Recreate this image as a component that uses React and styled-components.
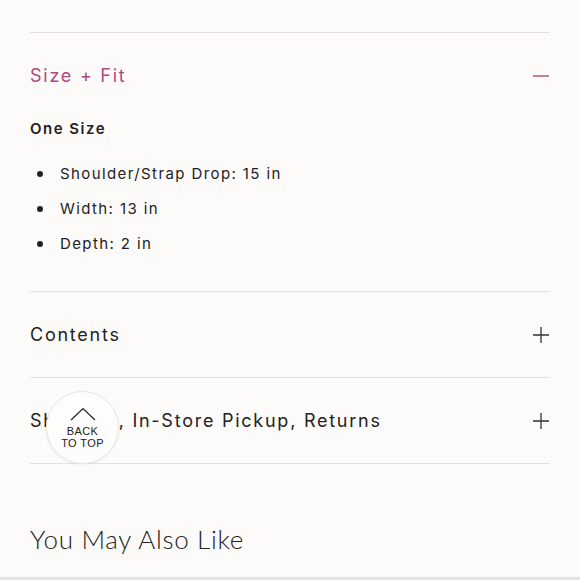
import React from "react"
import styled, { createGlobalStyle } from "styled-components"

const GlobalStyle = createGlobalStyle`
  html, body {
    margin: 0;
    padding: 0;
    background: #fdfbfa;
  }
  body {
    font-family: Inter, "Liberation Sans", sans-serif;
    color: #222;
  }
`

const Page = styled.div`
  position: relative;
  width: 580px;
  height: 580px;
  overflow: hidden;
  background: #fdfbfa;
  box-sizing: border-box;
  padding: 32px 30px 0;
`

const Section = styled.section`
  border-top: 1px solid #e4e1df;
`

const Header = styled.div`
  display: flex;
  align-items: center;
  justify-content: space-between;
  height: 85px;
`

const Title = styled.h3`
  margin: 0;
  font-family: Inter, "Liberation Sans", sans-serif;
  font-weight: 400;
  font-size: 18px;
  letter-spacing: 1.75px;
  color: ${p => (p.$open ? "#b0497e" : "#222")};
`

const Body = styled.div`
  padding: 0 0 30px;
`

const SizeLabel = styled.div`
  font-family: Inter, "Liberation Sans", sans-serif;
  font-weight: 600;
  font-size: 15px;
  letter-spacing: 1.5px;
  line-height: 22px;
  margin-bottom: 16px;
`

const List = styled.ul`
  margin: 0;
  padding: 0;
  list-style: none;
`

const Item = styled.li`
  position: relative;
  padding-left: 30px;
  font-family: Inter, "Liberation Sans", sans-serif;
  font-size: 15px;
  letter-spacing: 1.4px;
  line-height: 35px;
  &::before {
    content: "";
    position: absolute;
    left: 7px;
    top: 15px;
    width: 6px;
    height: 6px;
    border-radius: 50%;
    background: #222;
  }
`

const Heading = styled.h2`
  margin: 0;
  padding: 59px 0 0;
  font-family: Lato, "Liberation Sans", sans-serif;
  font-weight: 300;
  font-size: 26px;
  letter-spacing: 0.7px;
  color: #222;
`

const BottomBar = styled.div`
  position: absolute;
  left: 0;
  right: 0;
  bottom: 0;
  height: 3px;
  background: #e6e4e2;
`

const BackToTop = styled.button`
  position: absolute;
  left: 46px;
  top: 391px;
  width: 73px;
  height: 73px;
  border-radius: 50%;
  border: 1px solid #e8e6e4;
  background: #fefdfc;
  box-shadow: 0 1px 3px rgba(0, 0, 0, 0.06);
  display: flex;
  flex-direction: column;
  align-items: center;
  justify-content: center;
  padding: 0;
  font-family: "Liberation Sans", Arial, sans-serif;
  font-size: 11px;
  line-height: 12px;
  letter-spacing: 0.4px;
  color: #222;
  cursor: pointer;
`

const Chevron = () => (
  <svg width="26" height="14" viewBox="0 0 26 14" style={{ marginBottom: 4 }}>
    <path d="M1 13 L13 1.5 L25 13" fill="none" stroke="#222" strokeWidth="1.2" />
  </svg>
)

const Minus = () => (
  <svg width="18" height="18" viewBox="0 0 18 18">
    <path d="M1 9 H17" stroke="#b0497e" strokeWidth="1.4" />
  </svg>
)

const Plus = () => (
  <svg width="18" height="18" viewBox="0 0 18 18">
    <path d="M1 9 H17 M9 1 V17" stroke="#333" strokeWidth="1.3" />
  </svg>
)

export default function App() {
  return (
    <Page>
      <GlobalStyle />
      <Section>
        <Header>
          <Title $open>Size + Fit</Title>
          <Minus />
        </Header>
        <Body>
          <SizeLabel>One Size</SizeLabel>
          <List>
            <Item>Shoulder/Strap Drop: 15 in</Item>
            <Item>Width: 13 in</Item>
            <Item>Depth: 2 in</Item>
          </List>
        </Body>
      </Section>
      <Section>
        <Header>
          <Title>Contents</Title>
          <Plus />
        </Header>
      </Section>
      <Section>
        <Header>
          <Title>Shipping, In-Store Pickup, Returns</Title>
          <Plus />
        </Header>
      </Section>
      <Section />
      <Heading>You May Also Like</Heading>
      <BackToTop>
        <Chevron />
        <span>BACK</span>
        <span>TO TOP</span>
      </BackToTop>
      <BottomBar />
    </Page>
  )
}
